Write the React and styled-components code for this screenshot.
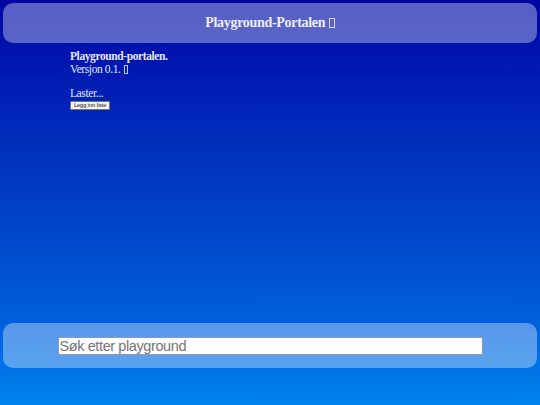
import React from "react";
import styled, { createGlobalStyle } from "styled-components";

const GlobalStyle = createGlobalStyle`
  html, body {
    margin: 0;
    padding: 0;
    height: 100%;
  }
  body {
    background: linear-gradient(to bottom, #0006a4 0%, #0060dc 80%, #0082f0 100%);
    font-family: "Liberation Serif", "Times New Roman", serif;
    color: #e4e6f6;
  }
`;

const Page = styled.div`
  min-height: 100vh;
  box-sizing: border-box;
  padding: 3px 3px 37px;
  display: flex;
  flex-direction: column;
`;

const Panel = styled.div`
  background: rgba(255, 255, 255, 0.35);
  border-radius: 10px;
  height: ${(p) => p.h}px;
  display: flex;
  align-items: center;
  justify-content: center;
  flex-shrink: 0;
`;

const Title = styled.h1`
  margin: 0;
  font-size: 14px;
  letter-spacing: -0.3px;
  font-weight: bold;
  color: #eceef8;
`;

// missing-glyph box, as the emoji shows in the reference
const Tofu = styled.span`
  display: inline-block;
  box-sizing: border-box;
  width: 0.38em;
  height: 0.72em;
  border: 1px solid currentColor;
  margin-left: 0.3em;
  vertical-align: -0.05em;
  opacity: 0.85;
`;

const Main = styled.main`
  flex: 1;
  padding: 7px 0 0 67px;
`;

const Line = styled.div`
  font-size: 11.5px;
  line-height: 13px;
  letter-spacing: -0.4px;
  font-weight: ${(p) => (p.bold ? "bold" : "normal")};
`;

const Status = styled.div`
  font-size: 11.5px;
  line-height: 13px;
  letter-spacing: -0.4px;
  margin-top: 11px;
`;

const SmallButton = styled.button`
  display: block;
  font-family: "Liberation Sans", Arial, sans-serif;
  font-size: 5.5px;
  padding: 0 3px;
  height: 9px;
  line-height: 7px;
  margin-top: 1px;
  background: #f0f0f0;
  color: #111;
  border: 1px solid #777;
  border-radius: 1px;
`;

const Search = styled.input`
  width: 425px;
  height: 18px;
  box-sizing: border-box;
  border: 1px solid #8a9ab8;
  padding: 0 1px;
  font-family: "Liberation Sans", Arial, sans-serif;
  font-size: 14.5px;
  letter-spacing: -0.4px;
  background: #fff;
  &::placeholder {
    color: #757575;
  }
`;

export default function App() {
  return (
    <>
      <GlobalStyle />
      <Page>
        <Panel h={40}>
          <Title>
            Playground-Portalen
            <Tofu />
          </Title>
        </Panel>
        <Main>
          <Line bold>Playground-portalen.</Line>
          <Line>
            Versjon 0.1.
            <Tofu />
          </Line>
          <Status>Laster...</Status>
          <SmallButton>Legg inn liste</SmallButton>
        </Main>
        <Panel h={45}>
          <Search placeholder="Søk etter playground" />
        </Panel>
      </Page>
    </>
  );
}
